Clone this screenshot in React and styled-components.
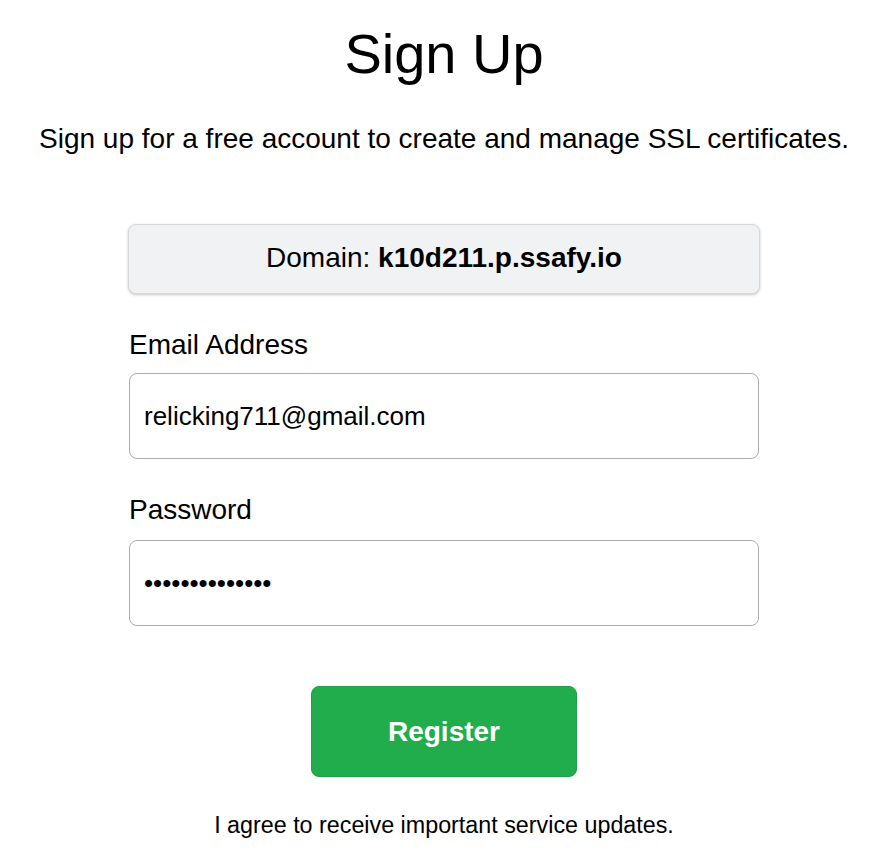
import React, { useState } from "react";
import styled, { createGlobalStyle } from "styled-components";

const GlobalStyle = createGlobalStyle`
  body {
    margin: 0;
    background: #fff;
    font-family: "Liberation Sans", Arial, sans-serif;
    color: #000;
  }
`;

const Page = styled.div`
  display: flex;
  flex-direction: column;
  align-items: center;
  padding-top: 22px;
`;

const Title = styled.h1`
  margin: 0;
  font-size: 56px;
  line-height: 64px;
  font-weight: 400;
`;

const Subtitle = styled.p`
  margin: 37px 0 0;
  font-size: 28px;
  line-height: 32px;
`;

const Form = styled.form`
  width: 630px;
  margin-top: 69px;
  display: flex;
  flex-direction: column;
`;

const DomainBox = styled.div`
  margin: 0 -1px;
  height: 70px;
  box-sizing: border-box;
  display: flex;
  align-items: center;
  justify-content: center;
  background: #f1f2f4;
  border: 1px solid #d6d7d9;
  border-radius: 8px;
  box-shadow: 0 1px 3px rgba(0, 0, 0, 0.22);
  font-size: 28px;
  line-height: 32px;
  padding-bottom: 2px;

  strong {
    font-weight: 700;
  }
`;

const Field = styled.div`
  display: flex;
  flex-direction: column;
  margin-top: 35px;
`;

const Label = styled.label`
  font-size: 28px;
  line-height: 32px;
  margin-bottom: ${(p) => p.$gap || 13}px;
`;

const Input = styled.input`
  box-sizing: border-box;
  width: 100%;
  height: 86px;
  border: 1px solid #ababab;
  border-radius: 8px;
  padding: 0 14px;
  font-family: "Liberation Sans", Arial, sans-serif;
  font-size: 26px;
  color: #000;
  outline: none;
  background: #fff;
`;

const Button = styled.button`
  align-self: center;
  margin-top: 60px;
  width: 266px;
  height: 91px;
  background: #21ad4c;
  border: 1px solid #1f9f47;
  border-radius: 8px;
  color: #fff;
  font-family: "Liberation Sans", Arial, sans-serif;
  font-size: 28px;
  font-weight: 700;
  cursor: pointer;
`;

const Note = styled.p`
  margin: 35px 0 0;
  text-align: center;
  font-size: 23.3px;
  line-height: 26px;
`;

export default function App() {
  const [email, setEmail] = useState("relicking711@gmail.com");
  const [password, setPassword] = useState("abcdefghijklmn");

  return (
    <>
      <GlobalStyle />
      <Page>
        <Title>Sign Up</Title>
        <Subtitle>
          Sign up for a free account to create and manage SSL certificates.
        </Subtitle>
        <Form onSubmit={(e) => e.preventDefault()}>
          <DomainBox>
            Domain:&nbsp;<strong>k10d211.p.ssafy.io</strong>
          </DomainBox>
          <Field>
            <Label htmlFor="email" $gap={12}>Email Address</Label>
            <Input
              id="email"
              type="text"
              value={email}
              onChange={(e) => setEmail(e.target.value)}
            />
          </Field>
          <Field>
            <Label htmlFor="password" $gap={14}>Password</Label>
            <Input
              id="password"
              type="password"
              value={password}
              onChange={(e) => setPassword(e.target.value)}
            />
          </Field>
          <Button type="submit">Register</Button>
          <Note>I agree to receive important service updates.</Note>
        </Form>
      </Page>
    </>
  );
}
